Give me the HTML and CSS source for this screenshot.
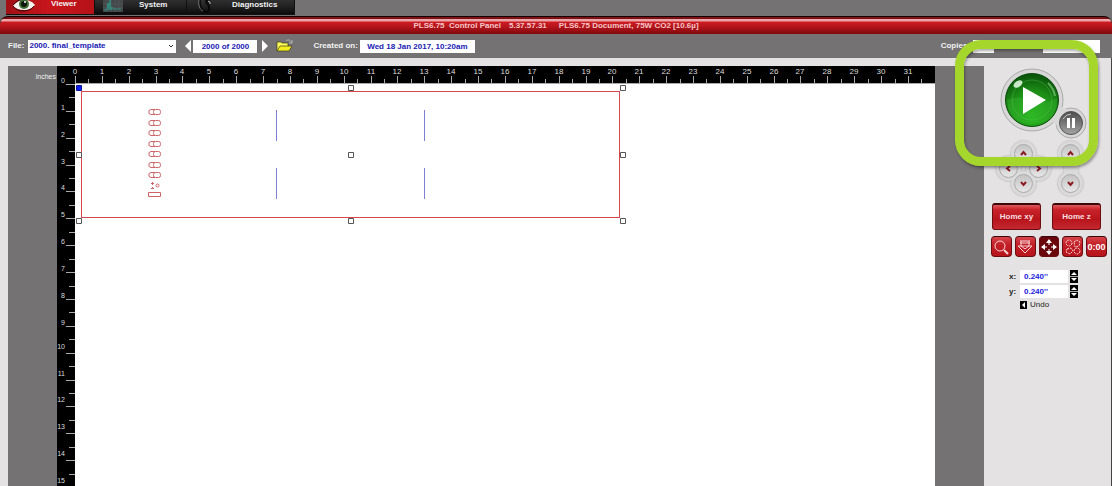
FILE: index.html
```html
<!DOCTYPE html>
<html lang="en">
<head>
<meta charset="utf-8">
<title>PLS6.75 Control Panel</title>
<link rel="stylesheet" href="styles.css">
</head>
<body>
<div class="app">
  <nav class="tabs">
    <button class="tab tab-viewer is-active" type="button">
      <svg class="tab-icon" width="24" height="14" viewBox="0 0 24 14">
        <path d="M1 6C5 1 8 0 12 0s8 1 11 5c-3 4-7 5-11 5S4 9 1 6z" fill="#f4f2ee"/>
        <path d="M1 5C5 1 7 0 9 0M22 6c-3 4-7 5-11 5S5 10 1 6" fill="none" stroke="#2a0507" stroke-width="1"/>
        <circle cx="12" cy="4" r="5" fill="#3c6d35"/><circle cx="12" cy="4" r="3" fill="#0d160c"/><circle cx="13" cy="2" r="1" fill="#fff"/>
      </svg>
      <span>Viewer</span>
    </button>
    <button class="tab tab-system" type="button">
      <svg class="tab-icon" width="20" height="14" viewBox="0 0 20 14">
        <rect width="20" height="12" fill="#444849"/>
        <path d="M4 0v12M8 0v12M12 0v12M16 0v12M0 4h20M0 8h20" stroke="#575c5d" stroke-width=".5"/>
        <path d="M1 10h3l1-7 1 7 1-10 1 10 1-3 1 2h8" fill="none" stroke="#2d9c8b" stroke-width=".8"/>
      </svg>
      <span>System</span>
    </button>
    <button class="tab tab-diag" type="button">
      <svg class="tab-icon" width="16" height="14" viewBox="0 0 16 14">
        <path d="M3 0c-1 6 2 12 6 12 5 0 3-7 1-9-2-2 0-4 2-2 1 1 1 2 1 3" fill="none" stroke="#080808" stroke-width="2"/>
        <path d="M2 0c-1 5 1 10 4 11" fill="none" stroke="#777"/><path d="M11 1l2 1v2" fill="none" stroke="#ccc"/>
      </svg>
      <span>Diagnostics</span>
    </button>
  </nav>

  <header class="titlebar">
    <span>PLS6.75&nbsp; Control Panel</span><span>5.37.57.31</span><span class="doc">PLS6.75 Document, 75W CO2 [10.6µ]</span>
  </header>

  <div class="toolbar">
    <label for="file">File:</label>
    <span class="select-wrap"><select id="file" class="field file"><option>2000. final_template</option></select><svg width="6" height="4" viewBox="0 0 6 4"><path d="M1 1l2 2 2-2" fill="none" stroke="#333"/></svg></span>
    <button class="step prev" type="button" aria-label="Previous file"><svg width="6" height="12" viewBox="0 0 6 12"><path d="M6 0v12L0 6z" fill="#fff"/></svg></button>
    <input class="field count" aria-label="File position" value="2000 of 2000">
    <button class="step next" type="button" aria-label="Next file"><svg width="6" height="12" viewBox="0 0 6 12"><path d="M0 0v12l6-6z" fill="#fff"/></svg></button>
    <button class="open" type="button" aria-label="Open file">
      <svg width="18" height="14" viewBox="0 0 18 14">
        <path d="M1 12V3h4l1 1h6v3" fill="#ffff59" stroke="#3b3b18" stroke-width=".7"/>
        <path d="M1 12l3-5h12l-3 5z" fill="#f4ee1e" stroke="#3b3b18" stroke-width=".7"/>
        <path d="M10 2c2-2 4-1 5 1M16 1v3h-3" fill="none" stroke="#b8b8b8"/>
      </svg>
    </button>
    <label class="created-label" for="created">Created on:</label>
    <input id="created" class="field created" value="Wed 18 Jan 2017, 10:20am">
    <div class="copies-group">
      <label for="copies">Copies:</label>
      <input id="copies" class="field copies">
      <input class="field total" aria-label="Total time">
    </div>
  </div>

  <div class="body">
    <main class="workspace">
      <div class="unit">inches</div>
      <svg class="ruler-v" id="rulerV" width="18"></svg>
      <div class="bed">
        <svg class="ruler-h" id="rulerH" height="18"></svg>
        <svg class="page" id="page">
          <rect x="6.5" y="7.5" width="538" height="126" fill="none" stroke="#d6484e"/>
          <g fill="none" stroke="#cc6468">
            <g id="shapes"></g>
            <path d="M73.500 108.500h12v4h-12z"/>
            <circle cx="82.500" cy="101.500" r="1.500"/>
            <path d="M77.500 98v3M77.500 103v2M76 99.500h3M76 104.500h3"/>
          </g>
          <path d="M201.500 26v31M201.500 84v31M349.500 26v31M349.500 84v31" stroke="#7d7fd4"/>
          <g fill="#fff" stroke="#555">
            <path d="M273.500 1.500h5v5h-5zM545.500 1.500h5v5h-5zM1.500 68.500h5v5h-5zM273.500 68.500h5v5h-5zM545.500 68.500h5v5h-5zM1.500 134.500h5v5h-5zM273.500 134.500h5v5h-5zM545.500 134.500h5v5h-5z"/>
          </g>
          <path d="M1.500 1.500h5v5h-5z" fill="#0a1ef0" stroke="#0a1499"/>
        </svg>
      </div>
    </main>

    <aside class="side">
      <div class="transport">
        <svg class="halo" width="88" height="72" viewBox="0 0 88 72">
          <g fill="#d5d5d5" stroke="#aaa"><circle cx="32" cy="33" r="31"/><circle cx="71" cy="56" r="15"/></g>
          <circle cx="32" cy="33" r="30" fill="#d8d8d8"/><circle cx="71" cy="56" r="14" fill="#d8d8d8"/>
          <path d="M61 40q4 3 10 2l-13 21q-1-8-6-8z" fill="#d8d8d8"/>
        </svg>
        <div class="transport-keys">
          <button class="play" type="button" aria-label="Start">
            <svg width="54" height="54" viewBox="0 0 54 54">
              <defs><radialGradient id="green" cx=".5" cy=".8" r=".8"><stop offset="0" stop-color="#25b51b"/><stop offset=".6" stop-color="#1c8c16"/><stop offset="1" stop-color="#075009"/></radialGradient></defs>
              <circle cx="27" cy="27" r="26.500" fill="url(#green)" stroke="#0c4c0d"/>
              <path d="M2 27q12-5 25 0t25-2q1 25-25 26Q3 50 2 27z" fill="#43bf3a" opacity=".3"/>
              <circle cx="27" cy="27" r="20" fill="none" stroke="#54c54d" opacity=".4"/>
              <ellipse cx="13" cy="11" rx="5" ry="3" fill="#dcf5da" opacity=".9" transform="rotate(-35 13 11)"/>
              <path d="M43 10q6 6 7 13" fill="none" stroke="#8fd98a" stroke-width="2" opacity=".6"/>
              <path d="M18 14v27l23-14z" fill="#fff"/>
            </svg>
          </button>
          <button class="pause" type="button" aria-label="Pause">
            <svg width="24" height="24" viewBox="0 0 24 24">
              <defs><linearGradient id="steel" x2="0" y2="1"><stop offset="0" stop-color="#4c4c4c"/><stop offset=".5" stop-color="#777"/><stop offset="1" stop-color="#a5a5a5"/></linearGradient></defs>
              <circle cx="12" cy="12" r="11.500" fill="url(#steel)" stroke="#555"/>
              <path d="M4 8q3-5 8-5" fill="none" stroke="#ccc"/>
              <path d="M8 7h3v10H8zM13 7h3v10h-3z" fill="#fff"/>
            </svg>
          </button>
        </div>
      </div>

      <div class="pads">
        <div class="pad pad-xy">
          <button class="key up" type="button" aria-label="Move up"><svg width="7" height="7" viewBox="0 0 7 7"><path d="M1 5l2.500-3L6 5"/></svg></button>
          <button class="key left" type="button" aria-label="Move left"><svg width="7" height="7" viewBox="0 0 7 7"><path d="M5 1L2 3.500 5 6"/></svg></button>
          <button class="key right" type="button" aria-label="Move right"><svg width="7" height="7" viewBox="0 0 7 7"><path d="M2 1l3 2.500L2 6"/></svg></button>
          <button class="key down" type="button" aria-label="Move down"><svg width="7" height="7" viewBox="0 0 7 7"><path d="M1 2l2.500 3L6 2"/></svg></button>
        </div>
        <div class="pad pad-z">
          <button class="key up" type="button" aria-label="Raise bed"><svg width="7" height="7" viewBox="0 0 7 7"><path d="M1 5l2.500-3L6 5"/></svg></button>
          <button class="key down" type="button" aria-label="Lower bed"><svg width="7" height="7" viewBox="0 0 7 7"><path d="M1 2l2.500 3L6 2"/></svg></button>
        </div>
      </div>

      <div class="homes">
        <button class="home" type="button">Home xy</button>
        <button class="home" type="button">Home z</button>
      </div>

      <div class="tools">
        <button class="tool" type="button" aria-label="Zoom"><svg width="16" height="16" viewBox="0 0 16 16"><circle cx="7" cy="7" r="5"/><path d="M11 11l4 4" stroke-width="2"/></svg></button>
        <button class="tool" type="button" aria-label="Focus"><svg width="16" height="16" viewBox="0 0 16 16"><path d="M3 2h10M3 4h10M1 7h14l-7 7zM4 7l4 3 4-3M4 2v5M12 2v5"/></svg></button>
        <button class="tool is-on" type="button" aria-label="Relocate"><svg width="16" height="16" viewBox="0 0 16 16"><path d="M8 3v3M8 10v3M3 8h3M10 8h3"/><path class="solid" d="M8 0l3 4H5zM8 16l3-4H5zM0 8l4-3v6zM16 8l-4-3v6z"/></svg></button>
        <button class="tool" type="button" aria-label="Duplicate"><svg width="16" height="16" viewBox="0 0 16 16"><g stroke-dasharray="2 1"><circle cx="4" cy="4" r="3"/><path d="M9 3l3-2 3 2-1 4-4 1zM2 10l4-1 2 3-3 3-4-2z"/><circle cx="12" cy="12" r="3"/></g></svg></button>
        <button class="tool timer" type="button">0:00</button>
      </div>

      <div class="coords">
        <label for="x">x:</label>
        <input id="x" class="field" value="0.240''">
        <button class="spin" type="button" aria-label="Step x"><svg width="8" height="13" viewBox="0 0 8 13"><path d="M1 5l3-3 3 3zM1 8l3 3 3-3z" fill="#fff"/><path d="M0 6.500h8" stroke="#aaa"/></svg></button>
        <label for="y">y:</label>
        <input id="y" class="field" value="0.240''">
        <button class="spin" type="button" aria-label="Step y"><svg width="8" height="13" viewBox="0 0 8 13"><path d="M1 5l3-3 3 3zM1 8l3 3 3-3z" fill="#fff"/><path d="M0 6.500h8" stroke="#aaa"/></svg></button>
        <button class="undo" type="button"><svg width="7" height="8" viewBox="0 0 7 8"><path d="M0 0h7v8H0z"/><path d="M5 1v6L2 4z" fill="#fff"/></svg>Undo</button>
      </div>
    </aside>
  </div>
  <div class="highlight"></div>
</div>
<script src="app.js"></script>
</body>
</html>
```
FILE: styles.css
```css
* { box-sizing: border-box; }

body {
  margin: 0;
  background: #747273;
  color: #f2f2f2;
  font: bold 8px/10px "Liberation Sans", Arial, sans-serif;
}

button, input, select {
  margin: 0;
  padding: 0;
  border: 0;
  border-radius: 0;
  background: none;
  color: inherit;
  font: inherit;
}

svg { display: block; flex: none; }

.app {
  position: relative;
  display: flex;
  flex-direction: column;
  height: 100vh;
  overflow: hidden;
}

/* Tabs */
.tabs { display: flex; height: 16px; padding: 0 6px; flex: none; }
.tab {
  display: flex;
  align-items: flex-start;
  height: 15px;
  border-right: 1px solid #111;
  border-bottom: 1px solid #111;
  background: linear-gradient(#303030, #202020 50%, #0b0b0b);
}
.tab.is-active { background: linear-gradient(90deg, #a01015, #c8151c 50%, #b51218); }
.tab-viewer { width: 89px; padding-left: 6px; gap: 15px; }
.tab-viewer span { line-height: 7px; }
.tab-system { width: 92px; padding-left: 8px; gap: 16px; }
.tab-diag { width: 108px; padding-left: 10px; gap: 19px; }

/* Title bar */
.titlebar {
  display: flex;
  flex: none;
  justify-content: center;
  gap: 8px;
  height: 18px;
  padding-top: 4px;
  border-top: 1px solid #180000;
  border-radius: 8px 8px 0 0;
  background: linear-gradient(#7a1216 0, #7a1216 2px, #eea5a8 2px, #eea5a8 4px, #cc1c22 5px, #b9161c 9px, #80090e 17px);
  color: #f3c6c8;
  white-space: nowrap;
}
.doc { padding-left: 4px; }

/* Toolbar */
.field {
  height: 13px;
  background: #fff;
  color: #2020b4;
  text-align: center;
}
.toolbar {
  display: flex;
  flex: none;
  align-items: center;
  height: 24px;
  padding: 0 12px 0 8px;
}
.select-wrap { display: flex; align-items: center; margin-left: 4px; }
.file { width: 148px; padding-left: 1px; appearance: none; text-align: left; }
.select-wrap svg { margin-left: -8px; margin-right: 2px; pointer-events: none; }
.prev { margin-left: 9px; }
.count { width: 64px; margin: 0 5px 0 2px; }
.open { margin-left: 8px; }
.created-label { margin-left: 19px; }
.created { width: 115px; margin-left: 2px; }
.copies-group { display: flex; align-items: center; margin-left: auto; }
.copies { width: 21px; margin-left: 3px; }
.total { width: 57px; margin-left: 49px; }

/* Body */
.body {
  display: flex;
  flex: 1;
  min-height: 0;
  border-right: 1px solid #444;
  background: #e4e2e3;
}
.workspace {
  display: flex;
  flex: 1;
  min-width: 0;
  margin: 8px 0 0 8px;
  padding-right: 49px;
  background: #747273;
}
.unit {
  width: 49px;
  padding: 6px 1px 0 0;
  font-size: 7px;
  font-weight: normal;
  text-align: right;
}
.ruler-v { height: 100%; background: #000; }
.bed { display: flex; flex: 1; flex-direction: column; min-width: 0; }
.ruler-h { width: 100%; background: #000; overflow: visible; }
.page { width: 100%; flex: 1; background: #fff; }
.ruler-v text, .ruler-h text { fill: #ddd; font-weight: normal; text-anchor: middle; }
.ruler-v text { font-size: 7px; text-anchor: end; }
.ruler-v path, .ruler-h path { fill: none; stroke: #aaa; }

/* Side panel */
.side {
  display: flex;
  flex: none;
  flex-direction: column;
  width: 127px;
  padding: 9px 4px 0 7px;
  color: #222;
}
.transport { display: grid; padding-left: 9px; }
.halo, .transport-keys { grid-area: 1 / 1; }
.transport-keys { display: flex; align-items: flex-end; padding: 0 0 4px 5px; }
.play { align-self: flex-start; padding-top: 6px; }

.pads { display: flex; gap: 17px; padding: 7px 0 0 10px; }
.pad {
  display: grid;
  grid-template-rows: repeat(3, 15px);
  place-items: center;
  isolation: isolate;
  filter: drop-shadow(0 0 1px #aaa);
}
.pad-xy { grid-template-columns: repeat(3, 15px); }
.pad-z { grid-template-columns: 15px; }
.key {
  position: relative;
  display: grid;
  place-items: center;
  width: 19px;
  height: 19px;
  border: 1px solid #aaa;
  border-radius: 50%;
  background: linear-gradient(#c4c4c4, #e6e6e6);
}
.key::before {
  content: "";
  position: absolute;
  inset: -4px;
  z-index: -1;
  border-radius: 50%;
  background: #dadada;
}
.pad-z::before {
  content: "";
  grid-area: 1 / 1 / 4 / 2;
  z-index: -1;
  width: 14px;
  height: 24px;
  background: #dadada;
}
.key path { fill: none; stroke: #8c1c24; stroke-width: 2; }
.pad-xy .up { grid-area: 1 / 2; }
.pad-xy .left { grid-area: 2 / 1; }
.pad-xy .right { grid-area: 2 / 3; }
.pad-xy .down { grid-area: 3 / 2; }
.pad-z .up { grid-area: 1 / 1; }
.pad-z .down { grid-area: 3 / 1; }

.homes { display: flex; gap: 11px; padding: 12px 0 0 1px; }
.home {
  width: 49px;
  height: 27px;
  border: 1px solid #6d0d12;
  border-top: 2px solid #3b080a;
  border-radius: 3px;
  background: linear-gradient(#e0585c, #c8222a 20%, #b8141c 60%, #c42a30);
  color: #f8dfe0;
}
.tools { display: flex; gap: 3px; padding-top: 6px; }
.tool {
  display: grid;
  place-items: center;
  width: 21px;
  height: 21px;
  border: 1px solid #6d0d12;
  border-top-color: #3b080a;
  border-radius: 4px;
  background: linear-gradient(#d8464b, #c21f27 40%, #b8141c);
  color: #fff;
}
.tool.is-on { background: #6a070c; }
.tool svg { fill: none; stroke: #f6d5d6; }
.tool.is-on svg { stroke: #fff; }
.tool .solid { fill: #fff; stroke: none; }
.timer { font-size: 9px; }

.coords {
  display: grid;
  grid-template-columns: 9px 48px 8px;
  gap: 2px;
  align-items: center;
  padding: 13px 0 0 18px;
}
.coords .field { width: 48px; padding-left: 4px; color: #1a1adc; text-align: left; }
.spin { background: #000; }
.undo {
  display: flex;
  grid-column: 2;
  align-items: center;
  gap: 3px;
  font-weight: normal;
}

/* Callout frame over the transport controls */
.highlight {
  position: absolute;
  top: 40px;
  right: 14px;
  width: 143px;
  height: 126px;
  border: 9px solid #a5d62c;
  border-radius: 26px;
  box-shadow: 1px 2px 3px #0006, inset 1px 2px 3px #0005;
  pointer-events: none;
}
```
FILE: app.js
```js
const pitch = 26.87;
const at = (n) => Math.round(n * pitch);

function horizontalRuler() {
  const ruler = document.getElementById("rulerH");
  const width = ruler.getBoundingClientRect().width;
  let ticks = `M0 17.5H${width}`, labels = "";
  for (let i = 0; at(i) < width - 6; i++) {
    const x = at(i);
    ticks += `M${x + 0.5} 10V18M${at(i + 0.5) + 0.5} 13V18`;
    labels += `<text x="${x}" y="8">${i}</text>`;
  }
  ruler.innerHTML = `<path d="${ticks}"/>${labels}`;
}

function verticalRuler() {
  const ruler = document.getElementById("rulerV");
  const height = ruler.getBoundingClientRect().height;
  let ticks = "", labels = "";
  for (let i = 0; 13 + at(i) < height; i++) {
    const y = 18 + at(i);
    const lift = i < 10 ? 1 : 4;
    ticks += `M9 ${y + 0.5}H18M12 ${18 + at(i + 0.5) + 0.5}H18`;
    labels += `<text x="8" y="${y - lift}">${i}</text>`;
  }
  ruler.innerHTML = `<path d="${ticks}"/>${labels}`;
}

function tagShapes(count) {
  let marks = "";
  for (let i = 0; i < count; i++) {
    const y = 28 + Math.round(i * 10.55);
    marks += `<path d="M80 ${y - 2.5}h-4l-2 1v3l2 1h4"/><rect x="78.5" y="${y - 2.5}" width="7" height="5" rx="2"/>`;
  }
  document.getElementById("shapes").innerHTML = marks;
}

horizontalRuler();
verticalRuler();
tagShapes(7);
```
